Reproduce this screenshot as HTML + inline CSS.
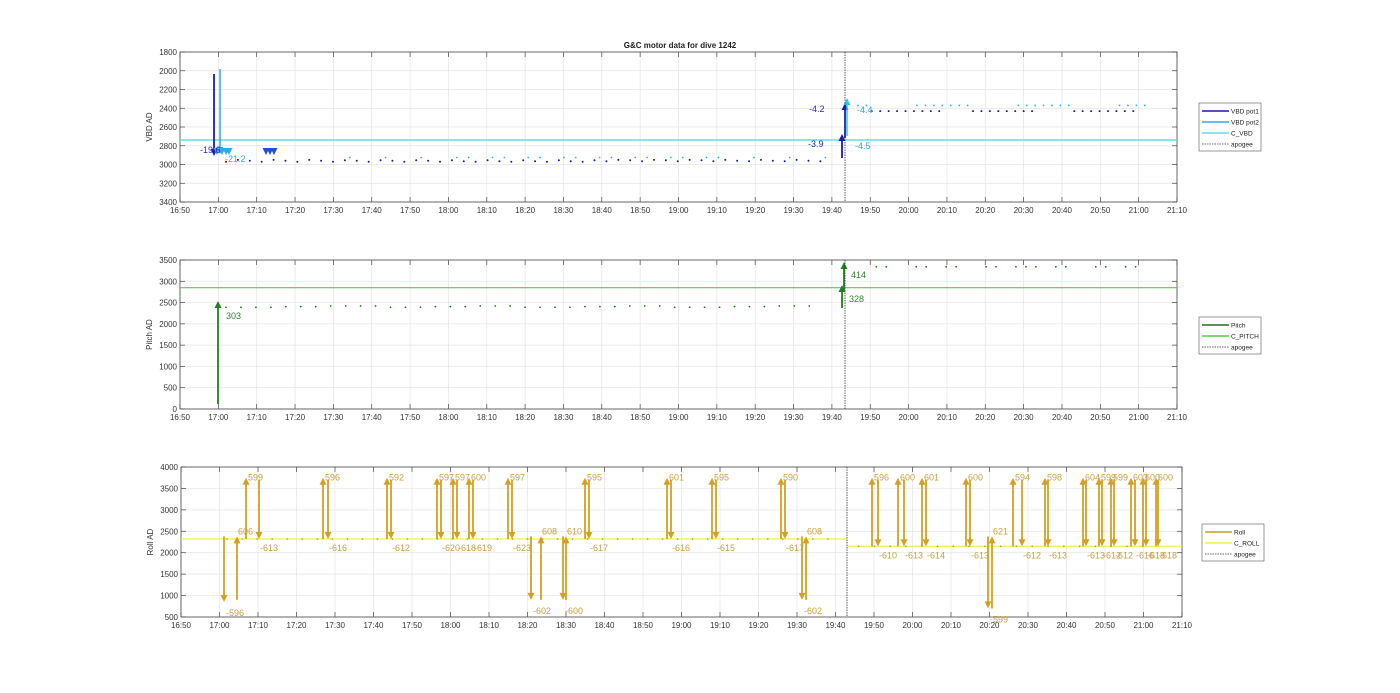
<!DOCTYPE html>
<html><head><meta charset="utf-8"><style>
body{margin:0;background:#fff;}
svg{display:block;font-family:"Liberation Sans",sans-serif;}
</style></head><body>
<svg id="s" width="1400" height="693" xmlns="http://www.w3.org/2000/svg">
<text x="680" y="48" font-size="8" font-weight="bold" text-anchor="middle" fill="#222">G&amp;C motor data for dive 1242</text>
</svg>
<script>
(function(){
const S=document.getElementById('s');const NS='http://www.w3.org/2000/svg';
function el(t,a,txt){const e=document.createElementNS(NS,t);for(const k in a)e.setAttribute(k,a[k]);if(txt!==undefined)e.textContent=String(txt);S.appendChild(e);return e;}
function axes(L,R,T,B,ymin,ymax,ystep,ylab,inv){
 const X=m=>L+(R-L)*m/260;
 const Y=v=>inv?T+(B-T)*(v-ymin)/(ymax-ymin):B-(B-T)*(v-ymin)/(ymax-ymin);
 for(let m=0;m<=260;m+=10){const x=X(m);el('line',{x1:x,x2:x,y1:T,y2:B,stroke:'#e4e4e4','stroke-width':0.7});
  el('line',{x1:x,x2:x,y1:T,y2:T+5,stroke:'#444','stroke-width':0.7});el('line',{x1:x,x2:x,y1:B,y2:B-5,stroke:'#444','stroke-width':0.7});
  const mm=50+m,h=16+Math.floor(mm/60),mi=mm%60;el('text',{x:x,y:B+11,'font-size':8,'text-anchor':'middle',fill:'#333'},h+':'+String(mi).padStart(2,'0'));}
 for(let v=ymin;v<=ymax;v+=ystep){const y=Y(v);el('line',{x1:L,x2:R,y1:y,y2:y,stroke:'#e4e4e4','stroke-width':0.7});
  el('line',{x1:L,x2:L+5,y1:y,y2:y,stroke:'#444','stroke-width':0.7});el('line',{x1:R,x2:R-5,y1:y,y2:y,stroke:'#444','stroke-width':0.7});
  el('text',{x:L-3,y:y+3,'font-size':8,'text-anchor':'end',fill:'#333'},v);}
 el('rect',{x:L,y:T,width:R-L,height:B-T,fill:'none',stroke:'#444','stroke-width':0.8});
 el('text',{x:0,y:0,'font-size':8,'text-anchor':'middle',fill:'#333',transform:'translate('+(L-28)+','+((T+B)/2)+') rotate(-90)'},ylab);
 return [X,Y];}
function arrow(x,y1,y2,c,w){el('line',{x1:x,x2:x,y1:y1,y2:y2+(y2<y1?4:-4),stroke:c,'stroke-width':w||1.8});
 const d=y2<y1?-1:1;el('polygon',{points:(x-3.5)+','+(y2-d*7)+' '+(x+3.5)+','+(y2-d*7)+' '+x+','+y2,fill:c});}
function legend(x,y,items){const h=items.length*11+4;el('rect',{x:x,y:y,width:62,height:h,fill:'#fff',stroke:'#555','stroke-width':0.6});
 items.forEach((it,i)=>{const yy=y+8+i*11;const a={x1:x+3,x2:x+30,y1:yy,y2:yy,stroke:it[1],'stroke-width':it[2]?0.8:1.5};if(it[2])a['stroke-dasharray']='1.5,1';el('line',a);
 el('text',{x:x+32,y:yy+2.5,'font-size':6.5,fill:'#222'},it[0]);});}
let r=axes(180,1177,52,202,1800,3400,200,'VBD AD',true);let X=r[0],Y=r[1];
el('line',{x1:180,x2:1177,y1:140,y2:140,stroke:'#5ee0e0','stroke-width':1.5});
for(let m=12;m<170;m+=3.1){const j=Math.floor(m*7)%5;el('circle',{cx:X(m),cy:Y(2950+j*5),r:1,fill:'#1a1aa0'});if(j%2)el('circle',{cx:X(m+1.3),cy:Y(2925),r:0.9,fill:'#2ab0ee'});}
for(let m=176;m<252;m+=2.2){const j=Math.floor(m*13)%7;if(j<5)el('circle',{cx:X(m),cy:Y(2430),r:1,fill:'#1a1aa0'});if(j>2)el('circle',{cx:X(m+0.8),cy:Y(2370),r:0.9,fill:'#2ab0ee'});}
arrow(214,74,156,'#1a1ac0');arrow(220,69,154,'#30a8e8',1.5);
[217,222,226,229,266,270,274].forEach(x=>{el('polygon',{points:(x-3.5)+',148 '+(x+3.5)+',148 '+x+',155',fill:x>260?'#2050d0':'#30a8e8'});});
arrow(842,158,134,'#1a1ac0');arrow(845,138,103,'#1a1ac0');arrow(847,136,98,'#30c8e8',1.5);
el('text',{x:200,y:153,'font-size':9,fill:'#2a2ab0'},'-19.6');el('text',{x:225,y:162,'font-size':9,fill:'#30a8d8'},'-21.2');
el('text',{x:808,y:147,'font-size':9,fill:'#2a2ab0'},'-3.9');el('text',{x:809,y:112,'font-size':9,fill:'#2a2ab0'},'-4.2');
el('text',{x:857,y:113,'font-size':9,fill:'#30a8d8'},'-4.4');el('text',{x:855,y:149,'font-size':9,fill:'#30a8d8'},'-4.5');
el('line',{x1:845,x2:845,y1:52,y2:202,stroke:'#333','stroke-width':0.8,'stroke-dasharray':'1.5,1'});
legend(1199,103,[['VBD pot1','#1a1aa0'],['VBD pot2','#30a8e8'],['C_VBD','#5ee0e0'],['apogee','#333',1]]);
r=axes(180,1177,260,409,0,3500,500,'Pitch AD',false);X=r[0];Y=r[1];
el('line',{x1:180,x2:1177,y1:Y(2850),y2:Y(2850),stroke:'#4cd04c','stroke-width':1.2});
for(let m=12;m<168;m+=3.9){el('circle',{cx:X(m),cy:Y(2390+(Math.floor(m*7)%3)*15),r:0.9,fill:'#207020'});}
for(let m=179;m<253;m+=2.6){if(Math.floor(m*11)%5<3)el('circle',{cx:X(m),cy:Y(3340),r:0.9,fill:'#207020'});}
arrow(218,404,301,'#208020');arrow(842,308,285,'#208020');arrow(844,290,262,'#208020');
el('text',{x:226,y:319,'font-size':9,fill:'#308030'},'303');el('text',{x:849,y:302,'font-size':9,fill:'#308030'},'328');el('text',{x:851,y:278,'font-size':9,fill:'#308030'},'414');
el('line',{x1:845,x2:845,y1:260,y2:409,stroke:'#333','stroke-width':0.8,'stroke-dasharray':'1.5,1'});
legend(1199,317,[['Pitch','#207020'],['C_PITCH','#4cd04c'],['apogee','#333',1]]);
r=axes(181,1182,467,617,500,4000,500,'Roll AD',false);X=r[0];Y=r[1];
const yr=Y(2320),yr2=Y(2150);
el('line',{x1:181,x2:847,y1:yr,y2:yr,stroke:'#f2f040','stroke-width':1.3});el('line',{x1:847,x2:1182,y1:yr2,y2:yr2,stroke:'#f2f040','stroke-width':1.3});
for(let m=12;m<170;m+=3.9)el('circle',{cx:X(m),cy:yr,r:0.8,fill:'#b09030'});
for(let m=176;m<252;m+=4.1)el('circle',{cx:X(m),cy:yr2,r:0.8,fill:'#b09030'});
const G='#d4a020',topY=Y(3750);
const pairs=[[246,259,'599','-613',0],[323,328,'596','-616',0],[387,391,'592','-612',0],[437,441,'597','-620',0],[453,457,'597','-618',0],[469,473,'600','-619',0],[508,512,'597','-623',0],[585,589,'595','-617',0],[667,671,'601','-616',0],[712,716,'595','-615',0],[781,785,'590','-617',0],
[872,878,'596','-610',1],[898,904,'600','-613',1],[922,926,'601','-614',1],[966,970,'600','-613',1],[1013,1022,'594','-612',1],[1045,1048,'598','-613',1],[1083,1086,'604','-613',1],[1099,1102,'599','-612',1],[1111,1114,'599','-612',1],[1131,1135,'603','-616',1],[1143,1146,'600','-618',1],[1156,1158,'600','-618',1]];
pairs.forEach(p=>{const b=p[4]?yr2:yr;arrow(p[0],b,topY,G);arrow(p[1],Y(3700),b,G);
 el('text',{x:p[0]+2,y:topY+3,'font-size':9,fill:'#c8a040'},p[2]);el('text',{x:p[1]+1,y:b+12,'font-size':9,fill:'#c8a040'},p[3]);});
const deep=[[224,237,'-596','606',Y(850),Y(900)],[531,541,'-602','608',Y(900),Y(900)],[563,566,'-600','610',Y(900),Y(900)],[802,806,'-602','608',Y(900),Y(900)],[988,992,'-599','621',Y(700),Y(700)]];
deep.forEach(d=>{arrow(d[0],Y(2380),d[4],G);arrow(d[1],d[5],Y(2380),G);
 el('text',{x:d[0]+2,y:d[4]+14,'font-size':9,fill:'#c8a040'},d[2]);el('text',{x:d[1]+1,y:Y(2380)-2,'font-size':9,fill:'#c8a040'},d[3]);});
el('line',{x1:847,x2:847,y1:467,y2:617,stroke:'#333','stroke-width':0.8,'stroke-dasharray':'1.5,1'});
legend(1202,524,[['Roll','#c89a20'],['C_ROLL','#f2f040'],['apogee','#333',1]]);
})();
</script>
</body></html>
